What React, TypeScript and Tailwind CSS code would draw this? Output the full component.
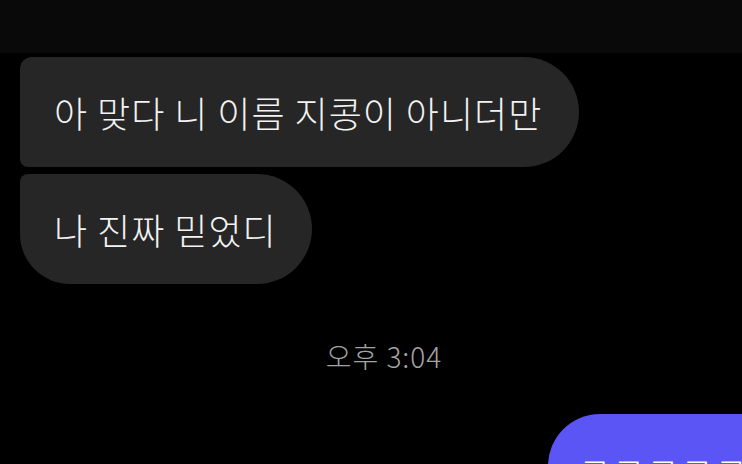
import React from 'react';

function App() {
  return (
    <div
      className="w-[742px] h-[464px] overflow-hidden bg-black flex flex-col"
      style={{ fontFamily: '"Noto Sans CJK KR", "Noto Sans", sans-serif' }}
    >
      {/* Top bar */}
      <div className="h-[53px] shrink-0 bg-[#090909]" />

      {/* Received messages */}
      <div className="flex flex-col items-start gap-[7px] pt-[4px] pl-[20px]">
        <div className="h-[110px] flex items-center pl-[34px] pr-[37px] bg-[#262626] rounded-tl-[12px] rounded-bl-[8px] rounded-r-[55px]">
          <span className="text-[36px] font-light tracking-[1px] text-[#f2f2f2] leading-none whitespace-nowrap">아 맞다 니 이름 지콩이 아니더만</span>
        </div>
        <div className="h-[110px] flex items-center pl-[34px] pr-[35px] bg-[#262626] rounded-tl-[8px] rounded-bl-[50px] rounded-r-[55px]">
          <span className="text-[36px] font-light tracking-[1px] text-[#f2f2f2] leading-none whitespace-nowrap">나 진짜 믿었디</span>
        </div>
      </div>

      {/* Timestamp */}
      <div className="mt-[58px] flex justify-center pl-[26px]">
        <span className="text-[28px] font-light tracking-[1px] text-[#a3a3a3] leading-none">오후 3:04</span>
      </div>

      {/* Sent message */}
      <div className="mt-[44px] flex justify-start pl-[548px]">
        <div className="shrink-0 h-[110px] pl-[30px] pr-[40px] pt-[36px] bg-[#5b55f6] rounded-tl-[52px] rounded-bl-[52px] rounded-r-[8px]">
          <span className="text-[36px] font-light tracking-[1px] text-white leading-none whitespace-nowrap">ㅋㅋㅋㅋㅋㅋ</span>
        </div>
      </div>
    </div>
  );
}

export default App;
